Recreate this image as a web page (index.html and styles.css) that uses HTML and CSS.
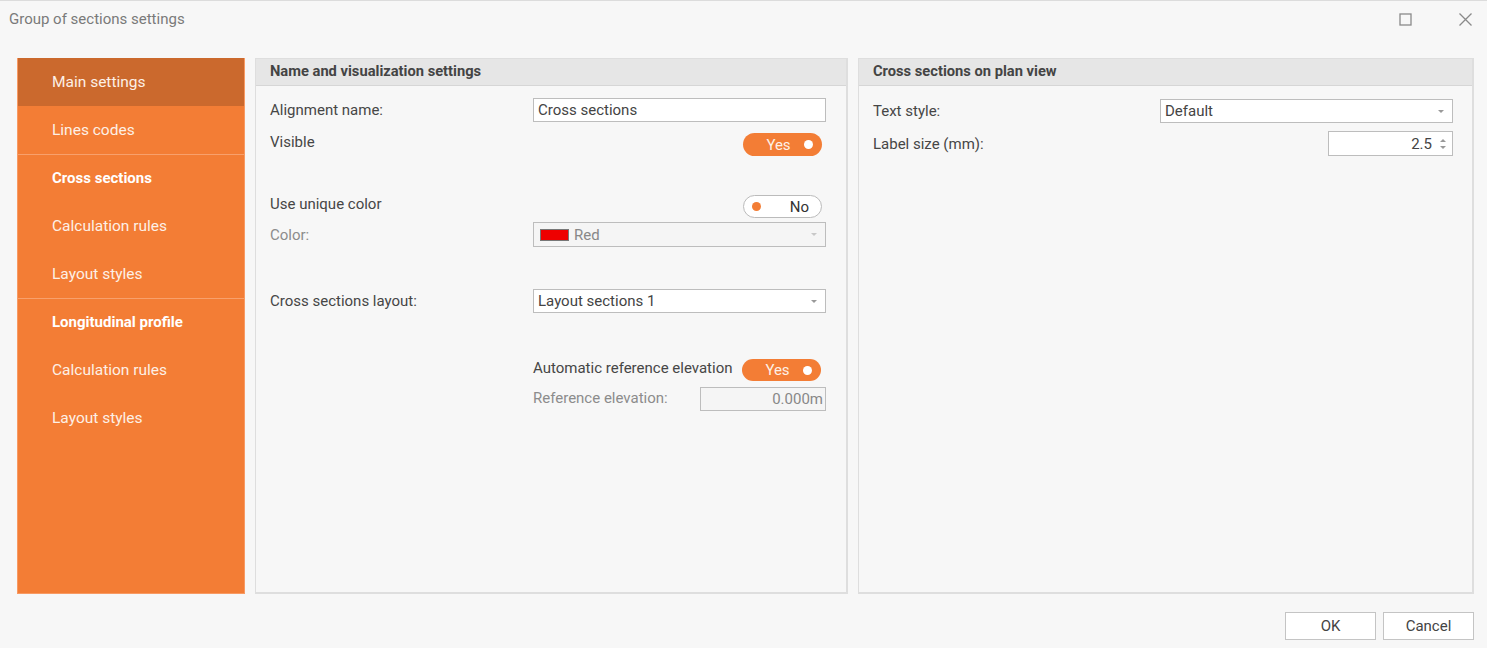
FILE: index.html
```html
<!DOCTYPE html>
<html lang="en">

<head>
    <meta charset="UTF-8">
    <title>Group of sections settings</title>
    <link rel="stylesheet" href="styles.css">
</head>

<body>
    <div class="dialog">
        <header class="titlebar">
            <span class="title">Group of sections settings</span>
            <div class="window-buttons">
                <svg class="win-icon" width="13" height="13" viewBox="0 0 13 13">
                    <rect x="1" y="1" width="11" height="11" fill="none" stroke="#8a8a8a" stroke-width="1.3" />
                </svg>
                <svg class="win-icon" width="15" height="15" viewBox="0 0 15 15">
                    <path d="M1.5 1.5 L13.5 13.5 M13.5 1.5 L1.5 13.5" stroke="#8a8a8a" stroke-width="1.3" />
                </svg>
            </div>
        </header>

        <div class="content">
            <nav class="sidebar">
                <div class="nav-group">
                    <a class="nav-item active">Main settings</a>
                    <a class="nav-item">Lines codes</a>
                </div>
                <div class="nav-group">
                    <a class="nav-item strong">Cross sections</a>
                    <a class="nav-item">Calculation rules</a>
                    <a class="nav-item">Layout styles</a>
                </div>
                <div class="nav-group last">
                    <a class="nav-item strong">Longitudinal profile</a>
                    <a class="nav-item">Calculation rules</a>
                    <a class="nav-item">Layout styles</a>
                </div>
            </nav>

            <section class="panel">
                <div class="panel-header">Name and visualization settings</div>
                <div class="panel-body">
                    <div class="row r-name">
                        <label class="label">Alignment name:</label>
                        <div class="control"><input class="text-input" type="text" value="Cross sections"></div>
                    </div>
                    <div class="row top r-visible">
                        <label class="label">Visible</label>
                        <div class="control right">
                            <span class="toggle on"><span class="toggle-text">Yes</span><span class="dot"></span></span>
                        </div>
                    </div>
                    <div class="row top r-unique">
                        <label class="label">Use unique color</label>
                        <div class="control right">
                            <span class="toggle off"><span class="dot"></span><span class="toggle-text">No</span></span>
                        </div>
                    </div>
                    <div class="row r-color">
                        <label class="label disabled">Color:</label>
                        <div class="control">
                            <div class="select disabled">
                                <span class="swatch"></span>
                                <span class="select-text">Red</span>
                                <span class="caret"></span>
                            </div>
                        </div>
                    </div>
                    <div class="row r-layout">
                        <label class="label">Cross sections layout:</label>
                        <div class="control">
                            <div class="select">
                                <span class="select-text">Layout sections 1</span>
                                <span class="caret"></span>
                            </div>
                        </div>
                    </div>
                    <div class="row r-auto">
                        <span class="label"></span>
                        <div class="control split">
                            <span class="sub-label">Automatic reference elevation</span>
                            <span class="toggle on small"><span class="toggle-text">Yes</span><span class="dot"></span></span>
                        </div>
                    </div>
                    <div class="row r-ref">
                        <span class="label"></span>
                        <div class="control split">
                            <span class="sub-label disabled">Reference elevation:</span>
                            <input class="text-input num disabled" type="text" value="0.000m" disabled>
                        </div>
                    </div>
                </div>
            </section>

            <section class="panel">
                <div class="panel-header">Cross sections on plan view</div>
                <div class="panel-body wide">
                    <div class="row r-style">
                        <label class="label">Text style:</label>
                        <div class="control">
                            <div class="select">
                                <span class="select-text">Default</span>
                                <span class="caret"></span>
                            </div>
                        </div>
                    </div>
                    <div class="row r-size">
                        <label class="label">Label size (mm):</label>
                        <div class="control right">
                            <div class="spinner">
                                <span class="spin-value">2.5</span>
                                <span class="spin-arrows"><span class="up"></span><span class="down"></span></span>
                            </div>
                        </div>
                    </div>
                </div>
            </section>
        </div>

        <footer class="footer">
            <button class="btn">OK</button>
            <button class="btn">Cancel</button>
        </footer>
    </div>
</body>

</html>
```

FILE: styles.css
```css
body {
    margin: 0;
    padding: 0;
    background-color: #f7f7f7;
    font-family: Roboto, "Liberation Sans", sans-serif;
    font-size: 15px;
    color: #464646;
}

.dialog {
    width: 1487px;
    height: 648px;
    box-sizing: border-box;
    border-top: 1px solid #dcdcdc;
    display: flex;
    flex-direction: column;
}

.titlebar {
    height: 36px;
    display: flex;
    align-items: center;
    justify-content: space-between;
    padding: 0 14px 0 9px;
}

.title {
    color: #7a7a7a;
    font-size: 15px;
    margin-top: -1px;
}

.window-buttons {
    display: flex;
    align-items: center;
    gap: 46px;
}

.content {
    display: grid;
    grid-template-columns: 228px 593px 616px;
    gap: 10px;
    height: 536px;
    margin-top: 21px;
    padding-left: 17px;
}

/* menu de gauche */
.sidebar {
    background-color: #f37d35;
    border: 1px solid #f89a63;
    border-top: none;
    box-sizing: border-box;
}

.nav-group {
    box-shadow: 0 1px 0 #f8a06c;
}

.nav-group.last {
    box-shadow: none;
}

.nav-item {
    display: block;
    height: 48px;
    line-height: 48px;
    padding-left: 34px;
    font-size: 15.5px;
    color: #fdf0e6;
}

.nav-item.active {
    background-color: #cb692d;
}

.nav-item.strong {
    font-weight: bold;
    font-size: 15px;
    color: #ffffff;
}

/* panneaux */
.panel {
    border: 2px solid #dedede;
    border-top-width: 1px;
    border-left-width: 1px;
    box-sizing: border-box;
    background-color: #f7f7f7;
}

.panel-header {
    height: 26px;
    line-height: 25px;
    background-color: #e6e6e6;
    border-bottom: 1px solid #d6d6d6;
    padding-left: 14px;
    font-weight: bold;
    font-size: 14.7px;
    color: #444;
}

.panel-body {
    padding: 0 20px 0 14px;
}

.panel-body.wide {
    padding-right: 19px;
}

.row {
    display: flex;
    align-items: center;
}

.row.top {
    align-items: flex-start;
}

.label {
    width: 263px;
    flex-shrink: 0;
    line-height: 18px;
}

.panel-body.wide .label {
    width: 287px;
}

.label.disabled,
.sub-label.disabled {
    color: #8c8c8c;
}

.control {
    flex: 1;
    display: flex;
}

.control.right {
    justify-content: flex-end;
}

.control.split {
    justify-content: space-between;
    align-items: center;
}

.r-name { margin-top: 12px; height: 24px; }
.r-visible { margin-top: 11px; height: 23px; }
.r-visible .control { padding-right: 4px; }
.r-unique { margin-top: 39px; height: 23px; }
.r-unique .control { padding-right: 4px; }
.r-color { margin-top: 4px; height: 25px; }
.r-color .select { height: 25px; }
.r-layout { margin-top: 42px; height: 24px; }
.r-auto { margin-top: 46px; height: 22px; }
.r-auto .control { padding-right: 5px; }
.r-auto .sub-label { margin-bottom: 5px; }
.r-ref { margin-top: 6px; height: 24px; }
.r-ref .sub-label { margin-bottom: 2px; }
.r-style { margin-top: 13px; height: 24px; }
.r-size { margin-top: 8px; height: 25px; }

.text-input {
    width: 100%;
    height: 24px;
    box-sizing: border-box;
    border: 1px solid #bdbdbd;
    background-color: #fff;
    font-family: inherit;
    font-size: 15px;
    color: #444;
    padding: 0 4px;
    outline: none;
}

.text-input.num {
    width: 126px;
    text-align: right;
    padding-right: 2px;
}

.text-input.disabled {
    background-color: #f5f5f5;
    color: #888;
}

.select {
    width: 100%;
    height: 24px;
    box-sizing: border-box;
    border: 1px solid #bdbdbd;
    background-color: #fff;
    display: flex;
    align-items: center;
    padding: 0 8px 0 4px;
    color: #444;
}

.select.disabled {
    background-color: #f5f5f5;
    color: #888;
}

.select-text {
    flex: 1;
}

.swatch {
    width: 27px;
    height: 10px;
    background-color: #ee0000;
    border: 1px solid #777;
    margin: 0 5px 0 2px;
}

.caret {
    width: 0;
    height: 0;
    border-left: 3px solid transparent;
    border-right: 3px solid transparent;
    border-top: 3px solid #999;
}

.select.disabled .caret {
    border-top-color: #c8c8c8;
}

/* interrupteurs oui / non */
.toggle {
    width: 79px;
    height: 23px;
    box-sizing: border-box;
    border-radius: 12px;
    display: flex;
    align-items: center;
    font-size: 15px;
}

.toggle.small {
    height: 22px;
}

.toggle.on {
    background-color: #f37d35;
    color: #fdf0e6;
    padding: 0 9px 0 0;
}

.toggle.on .toggle-text {
    flex: 1;
    text-align: center;
    padding-left: 10px;
}

.toggle.off {
    background-color: #fff;
    border: 1px solid #bbb;
    color: #333;
    padding: 0 12px 0 8px;
}

.toggle.off .toggle-text {
    flex: 1;
    text-align: right;
}

.dot {
    width: 9px;
    height: 9px;
    border-radius: 50%;
    background-color: #fff;
}

.toggle.off .dot {
    background-color: #f37d35;
}

.spinner {
    width: 125px;
    height: 25px;
    box-sizing: border-box;
    border: 1px solid #bdbdbd;
    background-color: #fff;
    display: flex;
    align-items: center;
    justify-content: flex-end;
    padding-right: 6px;
    color: #444;
}

.spin-value {
    margin-right: 8px;
}

.spin-arrows {
    display: flex;
    flex-direction: column;
    gap: 4px;
}

.spin-arrows .up {
    border-left: 3px solid transparent;
    border-right: 3px solid transparent;
    border-bottom: 3px solid #999;
}

.spin-arrows .down {
    border-left: 3px solid transparent;
    border-right: 3px solid transparent;
    border-top: 3px solid #999;
}

.footer {
    display: flex;
    justify-content: flex-end;
    gap: 7px;
    padding: 18px 13px 0 0;
}

.btn {
    width: 91px;
    height: 28px;
    box-sizing: border-box;
    border: 1px solid #c4c4c4;
    background-color: #fff;
    font-family: inherit;
    font-size: 15px;
    color: #444;
    cursor: pointer;
}
```
